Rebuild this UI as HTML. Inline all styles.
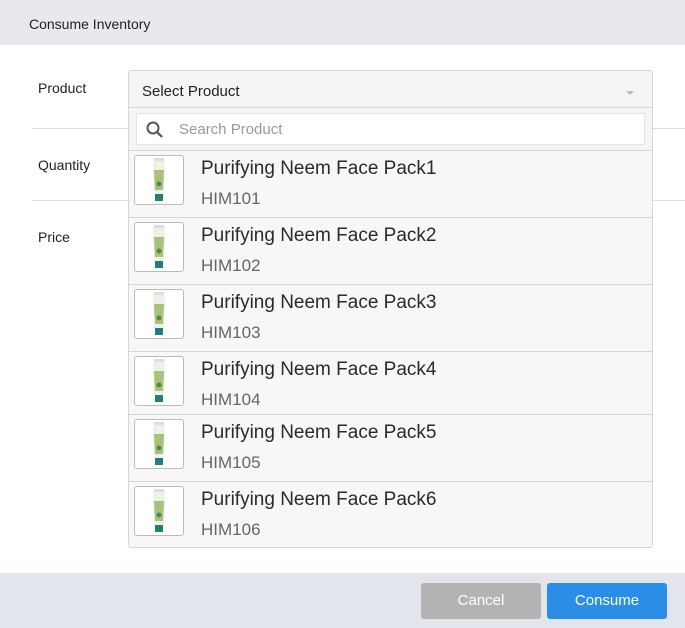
<!DOCTYPE html><html><head><style>
body{margin:0;width:685px;height:628px;background:#fff;font-family:"Liberation Sans",sans-serif;position:relative;overflow:hidden}
.a{position:absolute}
.hdr{left:0;top:0;width:685px;height:45px;background:#e8e9ed}
.lbl{font-size:14px;color:#222}
.line{height:1px;background:#ddd;left:32px;width:653px}
.dd{left:128px;top:70px;width:523px;height:476px;border:1px solid #d5d5d5;border-radius:3px;background:#f5f5f5;overflow:hidden}
.row{position:absolute;left:0;width:523px;background:#f7f7f7;border-top:1px solid #d5d5d5}
.img{position:absolute;left:5px;top:4px;width:48px;height:48px;border:1px solid #bbb;border-radius:3px;background:#fff}
.img svg{position:absolute;left:17px;top:2px}
.t{position:absolute;left:72px;top:7px;font-size:19px;color:#2a2a2a}
.c{position:absolute;left:72px;top:38px;font-size:17px;color:#666}
.btn{top:583px;height:36px;border-radius:3px;color:#fff;font-size:15px;text-align:center;line-height:36px}
</style></head><body>
<div class="a hdr"></div>
<div class="a" style="left:29px;top:16px;font-size:14px;color:#222">Consume Inventory</div>
<div class="a lbl" style="left:38px;top:80px">Product</div>
<div class="a line" style="top:128px"></div>
<div class="a lbl" style="left:38px;top:157px">Quantity</div>
<div class="a line" style="top:200px"></div>
<div class="a lbl" style="left:38px;top:229px">Price</div>
<div class="a dd">
<div class="a" style="left:13px;top:12px;font-size:15px;color:#222">Select Product</div>
<div class="a" style="left:497px;top:20px;width:0;height:0;border-left:4px solid transparent;border-right:4px solid transparent;border-top:4px solid #bbb"></div>
<div class="a" style="left:0;top:36px;width:523px;height:1px;background:#d5d5d5"></div>
<div class="a" style="left:7px;top:42px;width:507px;height:30px;background:#fff;border:1px solid #e3e3e3">
<svg class="a" style="left:8px;top:6px" width="20" height="20" viewBox="0 0 20 20"><circle cx="8" cy="8" r="5.5" fill="none" stroke="#555" stroke-width="2"/><path d="M12 12l5 5" stroke="#555" stroke-width="2.2"/></svg>
<div class="a" style="left:42px;top:7px;font-size:15px;color:#999">Search Product</div></div>
<svg width="0" height="0" style="position:absolute"><defs><symbol id="tb" viewBox="0 0 14 44"><rect x="2" y="0" width="10" height="3" fill="#ddd"/><path d="M1 3h12l-1 33H2z" fill="#eef2e4"/><path d="M2 12h10l-1 20H3z" fill="#a9c27a"/><circle cx="7" cy="26" r="2.5" fill="#4b8b5a"/><rect x="3" y="36" width="8" height="7" fill="#1f7f7a"/></symbol></defs></svg>
<div class="row" style="top:79px;height:66px"><div class="img"><svg width="14" height="44"><use href="#tb"/></svg></div><div class="t">Purifying Neem Face Pack1</div><div class="c">HIM101</div></div>
<div class="row" style="top:146px;height:66px"><div class="img"><svg width="14" height="44"><use href="#tb"/></svg></div><div class="t">Purifying Neem Face Pack2</div><div class="c">HIM102</div></div>
<div class="row" style="top:213px;height:66px"><div class="img"><svg width="14" height="44"><use href="#tb"/></svg></div><div class="t">Purifying Neem Face Pack3</div><div class="c">HIM103</div></div>
<div class="row" style="top:280px;height:63px"><div class="img"><svg width="14" height="44"><use href="#tb"/></svg></div><div class="t">Purifying Neem Face Pack4</div><div class="c">HIM104</div></div>
<div class="row" style="top:343px;height:66px"><div class="img"><svg width="14" height="44"><use href="#tb"/></svg></div><div class="t">Purifying Neem Face Pack5</div><div class="c">HIM105</div></div>
<div class="row" style="top:410px;height:66px"><div class="img"><svg width="14" height="44"><use href="#tb"/></svg></div><div class="t">Purifying Neem Face Pack6</div><div class="c">HIM106</div></div>
</div>
<div class="a" style="left:0;top:573px;width:685px;height:55px;background:#e3e5ec"></div>
<div class="a btn" style="left:421px;width:120px;background:#b3b3b3">Cancel</div>
<div class="a btn" style="left:547px;width:120px;background:#2a8ee6">Consume</div>
</body></html>
